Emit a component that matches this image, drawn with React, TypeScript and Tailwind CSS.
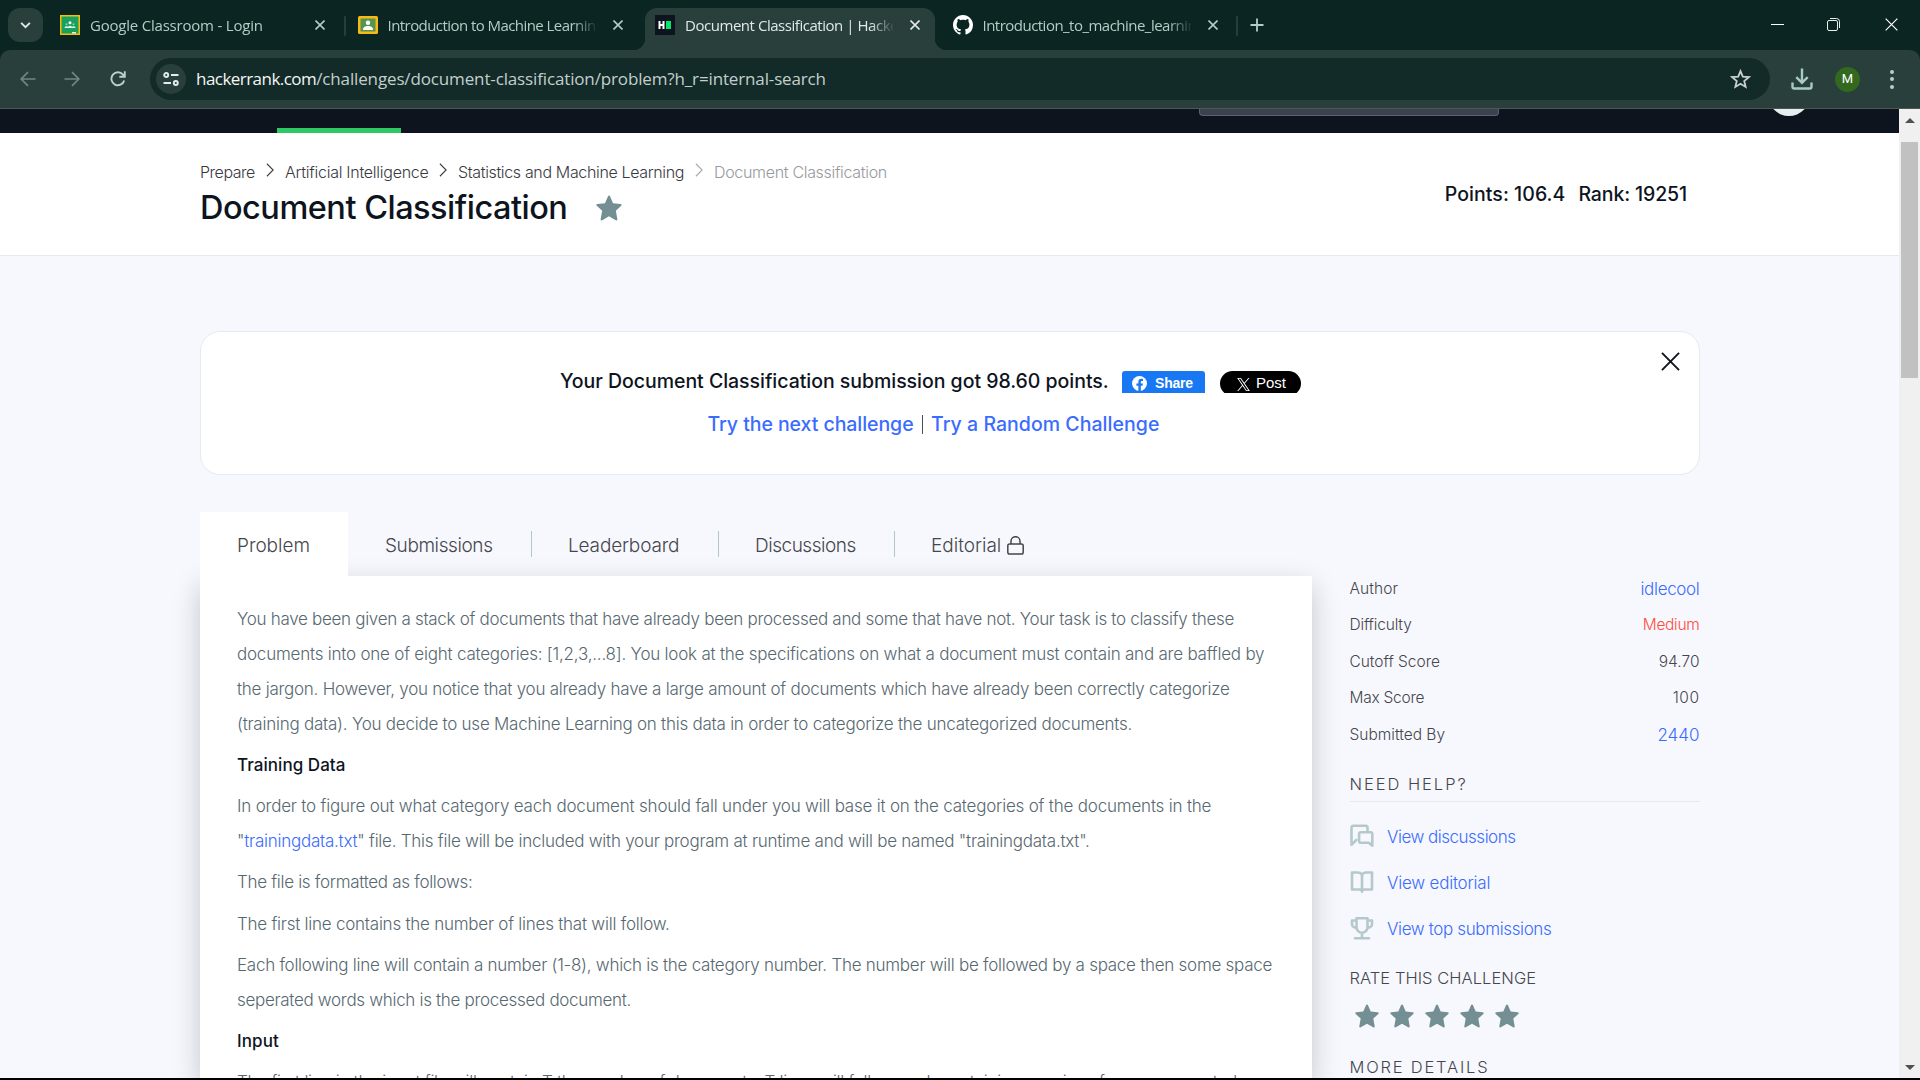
import type { ReactNode } from "react";

function CloseIcon({ className }: { className: string }) {
  return (
    <svg viewBox="0 0 10 10" className={className} fill="none" stroke="currentColor">
      <path d="M.5 .5 9.5 9.5M9.5 .5.5 9.5" />
    </svg>
  );
}

function StarShape({ className }: { className: string }) {
  return (
    <svg viewBox="0 0 24 24" className={className} fill="currentColor">
      <path d="M12 .5c.5 0 .8.4 1 .8l2.7 6.3 6.9.7c1.2.1 1.4 1 .7 1.7l-5 4.6 1.4 7.6c.2 1.1-.6 1.6-1.5 1.1L12 19.7l-6.2 3.6c-.9.5-1.7 0-1.5-1.1l1.4-7.6-5-4.6C0 9.300.2 8.400 1.400 8.300l6.900-.7L11 1.300c.2-.4.5-.8 1-.8z" />
    </svg>
  );
}

function ClassroomGreen() {
  return (
    <svg viewBox="0 0 20 20" className="h-5 w-5">
      <rect width="20" height="20" fill="#f9bc0b" />
      <rect x="1.500" y="1.500" width="17" height="17" fill="#18a05f" />
      <circle cx="10" cy="7.800" r="1.500" fill="#fff" />
      <circle cx="6.500" cy="9.200" r="1" fill="#8fd0b0" />
      <circle cx="13.500" cy="9.200" r="1" fill="#8fd0b0" />
      <path d="M4.500 12.500c.5-1.600 3-1.600 3.500-.8.800-1.400 3.200-1.400 4 0 .5-.8 3-.8 3.500.8v.5h-11z" fill="#dff2e8" />
      <rect x="12" y="17" width="4" height="1.500" fill="#e8f5ee" />
    </svg>
  );
}

function ClassroomYellow() {
  return (
    <svg viewBox="0 0 20 20" className="h-5 w-5">
      <rect y="1" width="20" height="18" rx="1.500" fill="#f5ba15" />
      <rect x="2.500" y="3.500" width="15" height="13" fill="#57944f" />
      <circle cx="10" cy="7.800" r="2.200" fill="#fff" />
      <path d="M5 14.500c0-2.500 2.500-3.500 5-3.500s5 1 5 3.500v.5H5z" fill="#fff" />
    </svg>
  );
}

function HackerRankIcon() {
  return (
    <svg viewBox="0 0 20 20" className="h-5 w-5">
      <rect width="20" height="20" fill="#0e141e" />
      <path d="M3.500 6h2v3h2V6h2v8h-2v-3h-2v3h-2z" fill="#fff" />
      <rect x="11" y="6" width="5" height="8" fill="#05e76b" />
    </svg>
  );
}

function GithubIcon() {
  return (
    <svg viewBox="0 0 16 16" className="h-5 w-5" fill="#fff">
      <path d="M8 0C3.580 0 0 3.580 0 8c0 3.540 2.290 6.530 5.470 7.590.4.070.55-.17.55-.38 0-.19-.01-.82-.01-1.490-2.010.37-2.530-.49-2.690-.94-.09-.23-.48-.94-.82-1.130-.28-.15-.68-.52-.01-.53.63-.01 1.080.58 1.230.82.72 1.210 1.870.87 2.330.66.070-.52.28-.87.51-1.070-1.780-.2-3.640-.89-3.640-3.950 0-.87.31-1.590.82-2.150-.08-.2-.36-1.020.080-2.120 0 0 .67-.21 2.200.82.64-.18 1.320-.27 2-.27s1.360.090 2 .27c1.530-1.040 2.200-.82 2.200-.82.44 1.100.16 1.920.080 2.120.51.56.82 1.270.82 2.150 0 3.070-1.870 3.750-3.650 3.950.29.25.54.73.54 1.480 0 1.070-.01 1.930-.01 2.200 0 .21.15.46.55.38A8.010 8.010 0 0 0 16 8c0-4.420-3.580-8-8-8z" />
    </svg>
  );
}

function BrowserTab({ icon, title, active, divider, tracking }: { icon: ReactNode; title: string; active?: boolean; divider?: boolean; tracking: string }) {
  return (
    <div className="flex h-full w-[297.5px] shrink-0 items-start pt-2">
      <div className={active ? "relative flex h-[42px] w-[290px] items-center rounded-t-xl bg-[#293f3b] pb-2 pl-2.5 text-[#dfe9e6]" : "relative flex h-[42px] w-[290px] items-center pb-2 pl-2.5 text-[#b4ccc6]"}>
        {active && (
          <>
            <span className="absolute bottom-0 -left-3 h-3 w-3 bg-[radial-gradient(circle_at_0_0,transparent_12px,#293f3b_12.5px)]" />
            <span className="absolute -right-3 bottom-0 h-3 w-3 bg-[radial-gradient(circle_at_100%_0,transparent_12px,#293f3b_12.5px)]" />
          </>
        )}
        {icon}
        <span className={"ml-2.5 h-6 w-[208px] overflow-hidden text-[15px] leading-6 whitespace-nowrap [mask-image:linear-gradient(to_right,#000_185px,transparent_210px)] " + tracking}>{title}</span>
        <CloseIcon className="ml-[17px] h-2.5 w-2.5 stroke-[1.6]" />
      </div>
      {divider && <span className="mt-2 ml-[3.500px] h-5 w-0.5 rounded bg-[#24403b]" />}
    </div>
  );
}

function TabStrip() {
  return (
    <div className="flex h-[50px] bg-[#0b2522]">
      <div className="mt-2 mr-[7px] ml-2 flex h-[34px] w-[35px] items-center justify-center rounded-xl bg-[#293f3b]">
        <svg viewBox="0 0 12 8" className="h-[7px] w-[11px]" fill="none" stroke="#dbe8e5" strokeWidth="2.2"><path d="M1 1l5 5 5-5" /></svg>
      </div>
      <BrowserTab icon={<ClassroomGreen />} title="Google Classroom - Login" tracking="tracking-[-0.21px]" divider />
      <BrowserTab icon={<ClassroomYellow />} title="Introduction to Machine Learnin" tracking="tracking-[-0.56px]" />
      <BrowserTab icon={<HackerRankIcon />} title="Document Classification | Hacke" tracking="tracking-[-0.46px]" active />
      <BrowserTab icon={<GithubIcon />} title="Introduction_to_machine_learnin" tracking="tracking-[-0.52px]" divider />
      <svg viewBox="0 0 14 14" className="mt-[18px] ml-[10px] h-3.5 w-3.5" stroke="#b4ccc6" strokeWidth="1.800"><path d="M7 .5v13M.5 7h13" /></svg>
      <div className="mt-[18px] mr-[22px] ml-auto flex h-[13px] items-center">
        <span className="h-[1.500px] w-[13px] bg-white" />
        <svg viewBox="0 0 13 13" className="mr-[45px] ml-[43px] h-[13px] w-[13px]" fill="none" stroke="#e9efee"><path d="M3 .5h6.500a3 3 0 0 1 3 3V10" /><rect x=".5" y="2.500" width="10" height="10" rx="1.500" /></svg>
        <CloseIcon className="h-[13px] w-[13px] stroke-[0.9] text-white" />
      </div>
    </div>
  );
}

function Toolbar() {
  return (
    <div className="bg-[#0b2522]">
      <div className="flex h-[59px] items-center rounded-t-[10px] border-b border-[#4c5754] bg-[#293f3b]">
        <svg viewBox="0 0 16 16" className="ml-5 h-4 w-4" fill="none" stroke="#6f8681" strokeWidth="1.700"><path d="M15.500 8H1.500M8 1.200 1.200 8 8 14.800" /></svg>
        <svg viewBox="0 0 16 16" className="ml-[28px] h-4 w-4" fill="none" stroke="#6f8681" strokeWidth="1.700"><path d="M.5 8h14M8 1.200 14.800 8 8 14.800" /></svg>
        <svg viewBox="0 0 16 16" className="ml-[30px] h-4 w-4" fill="none" stroke="#b9d0cb" strokeWidth="1.900"><path d="M14.200 9.500A6.500 6.500 0 1 1 13 3.700L14.500 5.500M14.800.3v5.500H9.300" /></svg>
        <div className="ml-6 flex h-[42px] w-[1620px] items-center rounded-full bg-[#122b28] pl-1.5">
          <span className="flex h-[30px] w-[30px] items-center justify-center rounded-full bg-[#293f3b]">
            <svg viewBox="0 0 16 14" className="h-3.5 w-4" fill="none" stroke="#e3ecea" strokeWidth="1.900"><circle cx="3.200" cy="3" r="2" /><path d="M8 3h7.500M.5 11H8" /><circle cx="12.800" cy="11" r="2" /></svg>
          </span>
          <p className="ml-2.5 text-[17px] tracking-[-0.14px] whitespace-nowrap text-[#c3cfcc]"><span className="tracking-[-0.54px] text-[#f2f7f6]">hackerrank.com</span>/challenges/document-classification/problem?h_r=internal-search</p>
          <svg viewBox="0 0 22 21" className="mr-[19px] ml-auto h-5 w-[21px]" fill="none" stroke="#c8d0ce" strokeWidth="1.900"><path d="m11 2.200 2.400 5.800 6.300.5-4.800 4.100 1.500 6.200-5.400-3.300-5.400 3.300 1.500-6.200-4.800-4.100 6.300-.5z" /></svg>
        </div>
        <svg viewBox="0 0 22 22" className="ml-[21px] h-[22px] w-[22px]" fill="none" stroke="#a9cbc4" strokeWidth="2.400"><path d="M11 .5v14M5.300 9.200l5.700 5.600 5.700-5.600M1.500 14.500v4.300c0 1 .6 1.700 1.700 1.700h15.600c1.100 0 1.700-.7 1.700-1.700v-4.300" /></svg>
        <span className="ml-[22px] flex h-[25px] w-[25px] items-center justify-center rounded-full bg-[#33691e] font-['Roboto'] text-[13px] text-white">M</span>
        <span className="ml-[30px] flex flex-col gap-[3.500px]">
          <i className="h-1 w-1 rounded-full bg-[#b4d0ca]" /><i className="h-1 w-1 rounded-full bg-[#b4d0ca]" /><i className="h-1 w-1 rounded-full bg-[#b4d0ca]" />
        </span>
      </div>
    </div>
  );
}

function Crumb({ children, className }: { children: ReactNode; className: string }) {
  return <span className={"shrink-0 whitespace-nowrap " + className}>{children}</span>;
}

function Chevron({ className }: { className: string }) {
  return <svg viewBox="0 0 9 14" className={"mx-[11px] -mt-1 h-[14px] w-2 shrink-0 " + className} preserveAspectRatio="none" fill="none" stroke="currentColor" strokeWidth="1.200"><path d="m1 .8 7 6.200L1 13.200" /></svg>;
}

function PageHeader() {
  return (
    <header className="flex h-[123px] justify-between border-b border-[#e6e8ef] bg-white pl-[200px]">
      <div className="pt-[28px]">
        <nav className="flex h-[22px] items-center text-[16px] leading-[22px] font-light text-[#39393f]">
          <Crumb className="w-[55px] tracking-[-0.46px]">Prepare</Crumb>
          <Chevron className="" />
          <Crumb className="w-[143px] tracking-[-0.26px]">Artificial Intelligence</Crumb>
          <Chevron className="" />
          <Crumb className="w-[226px] tracking-[-0.35px]">Statistics and Machine Learning</Crumb>
          <Chevron className="text-[#a5a7ab]" />
          <Crumb className="tracking-[-0.32px] text-[#97999e]">Document Classification</Crumb>
        </nav>
        <div className="flex h-10 items-center pt-[9px]">
          <h1 className="w-[367px] text-[32.5px] leading-10 font-medium tracking-[-0.5px] whitespace-nowrap text-[#0e141e]">Document Classification</h1>
          <StarShape className="ml-[29px] h-[26px] w-[26px] text-[#738f93]" />
        </div>
      </div>
      <div className="mr-[212px] flex gap-[13px] pt-[49px] text-[19.5px] leading-6 font-medium whitespace-nowrap text-[#0e141e]">
        <span className="tracking-[0.05px]">Points: 106.4</span>
        <span className="tracking-[-0.12px]">Rank: 19251</span>
      </div>
    </header>
  );
}

function ResultBanner() {
  return (
    <section className="relative ml-[200px] h-[144px] w-[1500px] rounded-[20px] border border-[#e7e9f1] bg-white text-[19.5px] font-medium">
      <CloseIcon className="absolute top-5 right-[19px] h-[19px] w-[19px] stroke-1 text-[#0e141e]" />
      <div className="flex pt-[37px] pl-[359px]">
        <p className="w-[549px] leading-6 tracking-[-0.03px] whitespace-nowrap text-[#0e141e]">Your Document Classification submission got 98.60 points.</p>
        <div className="mt-[2px] ml-[13px] flex h-[22px] overflow-hidden font-['Liberation_Sans']">
          <span className="flex h-[25px] w-[83px] items-center rounded-[3px] bg-[#1877f2] pl-[10px] text-[14px] font-bold text-white">
            <svg viewBox="0 0 16 16" className="mr-[8px] h-[15px] w-[15px]"><circle cx="8" cy="8" r="8" fill="#fff" /><path d="M6.800 16V10.300H4.700V8h2.100V6.200c0-2.100 1.200-3.200 3.100-3.200.9 0 1.800.2 1.800.2v2h-1c-1 0-1.300.6-1.300 1.300V8h2.200l-.4 2.300H9.400V16z" fill="#1877f2" /></svg>
            <span className="text-[14px] tracking-[-0.2px]">Share</span>
          </span>
          <span className="ml-[15px] flex h-[25px] w-[81px] items-center rounded-full bg-black pl-[17px] text-[15px] font-normal text-white">
            <svg viewBox="0 0 24 24" className="mt-0.5 mr-[6px] h-[13px] w-[13px]" fill="#fff"><path d="M14.300 10.200 23 0h-2.100l-7.500 8.800L7.300 0H.3l9.100 13.300L.3 24h2.100l8-9.300 6.400 9.300h7zm-2.800 3.300-.9-1.300L3.100 1.600h3.200l5.900 8.500.9 1.300 7.700 11.100h-3.200z" /></svg>
            Post
          </span>
        </div>
      </div>
      <p className="flex pt-[19px] pl-[506.500px] leading-6 whitespace-nowrap text-[#3a6cff]">
        <span className="w-[207px] tracking-[-0.06px]">Try the next challenge</span>
        <span className="mt-[3px] ml-[7px] h-[19px] w-px bg-[#4b4f58]" />
        <span className="ml-[8.500px] tracking-[0.04px]">Try a Random Challenge</span>
      </p>
    </section>
  );
}

function TabDivider() {
  return <span className="h-[26px] w-px bg-[#b3c5ca]" />;
}

function ChallengeTabs() {
  return (
    <nav className="relative flex h-16 items-center text-[19px] font-light whitespace-nowrap text-[#45464d]">
      <span className="flex h-full w-[148px] items-center bg-white pt-1 pl-[37px] tracking-[-0.03px]">Problem</span>
      <span className="w-[183px] pt-1 pl-[37px] tracking-[-0.4px]">Submissions</span>
      <TabDivider />
      <span className="w-[186px] pt-1 pl-[36px] tracking-[-0.16px]">Leaderboard</span>
      <TabDivider />
      <span className="w-[175px] pt-1 pl-[36px] tracking-[-0.47px]">Discussions</span>
      <TabDivider />
      <span className="pt-1 pl-[36px]">Editorial</span>
      <svg viewBox="0 0 17 19" className="mt-0.5 ml-[6px] h-[19px] w-[17px]" fill="none" stroke="#45464d" strokeWidth="1.500"><rect x=".8" y="8" width="15.400" height="10" rx="1.800" /><path d="M4 8V5.200a4.500 4.500 0 0 1 9 0V8" /></svg>
    </nav>
  );
}

function Line({ children, className }: { children: ReactNode; className: string }) {
  return <span className={"block whitespace-nowrap " + className}>{children}</span>;
}

function Statement() {
  return (
    <article className="flex h-[502px] flex-col gap-[6.250px] bg-white pt-[25.5px] pl-[37px] text-[17px] leading-[35px] font-light text-[#576871] shadow-[0_10px_26px_rgba(20,24,40,0.22)]">
      <p>
        <Line className="tracking-[-0.3px]">You have been given a stack of documents that have already been processed and some that have not. Your task is to classify these</Line>
        <Line className="tracking-[-0.22px]">documents into one of eight categories: [1,2,3,...8]. You look at the specifications on what a document must contain and are baffled by</Line>
        <Line className="tracking-[-0.26px]">the jargon. However, you notice that you already have a large amount of documents which have already been correctly categorize</Line>
        <Line className="tracking-[-0.242px]">(training data). You decide to use Machine Learning on this data in order to categorize the uncategorized documents.</Line>
      </p>
      <h2 className="font-medium tracking-[0.05px] text-[#0e141e]">Training Data</h2>
      <p>
        <Line className="tracking-[-0.2px]">In order to figure out what category each document should fall under you will base it on the categories of the documents in the</Line>
        <Line className="tracking-[-0.25px]">"<a className="text-[#3a6cff]">trainingdata.txt</a>" file. This file will be included with your program at runtime and will be named "trainingdata.txt".</Line>
      </p>
      <p className="tracking-[-0.3px]">The file is formatted as follows:</p>
      <p className="tracking-[-0.24px]">The first line contains the number of lines that will follow.</p>
      <p>
        <Line className="tracking-[-0.268px]">Each following line will contain a number (1-8), which is the category number. The number will be followed by a space then some space</Line>
        <Line className="tracking-[-0.31px]">seperated words which is the processed document.</Line>
      </p>
      <h2 className="font-medium tracking-[0.12px] text-[#0e141e]">Input</h2>
      <p className="tracking-[-0.262px] whitespace-nowrap">The first line in the input file will contain T the number of documents. T lines will follow each containing a series of space seperated</p>
    </article>
  );
}

function Fact({ label, value, labelClass, valueClass }: { label: string; value: string; labelClass?: string; valueClass: string }) {
  return (
    <div className="flex h-[36.500px] items-center justify-between">
      <span className={labelClass}>{label}</span>
      <span className={valueClass}>{value}</span>
    </div>
  );
}

function HelpLink({ icon, children, className }: { icon: ReactNode; children: ReactNode; className: string }) {
  return (
    <div className="flex h-[46px] items-center text-[17px] text-[#3a6cff]">
      <svg viewBox="0 0 24 24" className="mb-[3px] h-6 w-6" fill="none" stroke="#b5c9cc" strokeWidth="2.600" strokeLinejoin="round" strokeLinecap="round">{icon}</svg>
      <span className={"ml-[13.500px] " + className}>{children}</span>
    </div>
  );
}

function Sidebar() {
  return (
    <aside className="mt-[58px] ml-[37.500px] w-[350px] text-[15.5px] font-light whitespace-nowrap text-[#45464d]">
      <Fact label="Author" labelClass="tracking-[0.1px]" value="idlecool" valueClass="pt-0.5 text-[17px] tracking-[-0.33px] text-[#3a6cff]" />
      <Fact label="Difficulty" labelClass="tracking-[-0.18px]" value="Medium" valueClass="tracking-[-0.3px] text-[#ff4a3d]" />
      <Fact label="Cutoff Score" labelClass="tracking-[-0.02px]" value="94.70" valueClass="" />
      <Fact label="Max Score" labelClass="tracking-[-0.25px]" value="100" valueClass="tracking-[0.5px]" />
      <Fact label="Submitted By" value="2440" valueClass="pt-0.5 text-[17px] text-[#3a6cff]" />
      <h3 className="mt-[13px] h-[36px] border-b border-[#e6e9ee] text-[16.5px] leading-[36px] tracking-[1.95px]">NEED HELP?</h3>
      <div className="pt-[13px]">
        <HelpLink className="tracking-[-0.5px]" icon={<><path d="M17.500 6.500V3.500a1.800 1.800 0 0 0-1.800-1.800H3.300A1.800 1.800 0 0 0 1.500 3.500v17.200l4.800-4.700" /><path d="M10.700 8.200h10a1.600 1.600 0 0 1 1.600 1.600v12l-3.500-3h-8.100a1.600 1.600 0 0 1-1.600-1.600V9.800a1.600 1.600 0 0 1 1.600-1.600z" /></>}>View discussions</HelpLink>
        <HelpLink className="tracking-[-0.22px]" icon={<path d="M12 4.800C11 3 9.500 2.500 8 2.500H2v17h7.500c1.500 0 2.500.8 2.500 2.300 0-1.500 1-2.300 2.500-2.300H22v-17h-6c-1.500 0-3 .5-4 2.300zM12 4.800v17" />}>View editorial</HelpLink>
        <HelpLink className="tracking-[-0.37px]" icon={<path d="M6.500 2.200h11v9c0 3-2.500 5.600-5.500 5.600s-5.500-2.600-5.500-5.600zM6.500 4.500H2v3.800c0 2 2 3.500 4.500 3.500M17.500 4.500H22v3.800c0 2-2 3.500-4.500 3.500M12 17v5M5 22.300h14" />}>View top submissions</HelpLink>
      </div>
      <h3 className="mt-[8px] text-[16.5px] leading-[34px] tracking-[0.05px]">RATE THIS CHALLENGE</h3>
      <div className="mt-[9px] flex gap-[11px] pl-[5px] text-[#738f93]">
        <StarShape className="h-6 w-6" /><StarShape className="h-6 w-6" /><StarShape className="h-6 w-6" /><StarShape className="h-6 w-6" /><StarShape className="h-6 w-6" />
      </div>
      <h3 className="mt-[21px] text-[16.5px] leading-[36px] tracking-[1.8px]">MORE DETAILS</h3>
    </aside>
  );
}

function Scrollbar() {
  return (
    <div className="flex h-full w-[21px] flex-col items-center justify-between bg-[#f0f0f0] pt-[9px] pb-[8px]">
      <span className="h-0 w-0 border-x-[5px] border-b-[5px] border-x-transparent border-b-[#505050]" />
      <span className="mt-[19px] mb-auto h-[236px] w-[17px] bg-[#c1c1c1]" />
      <span className="h-0 w-0 border-x-[5px] border-t-[5px] border-x-transparent border-t-[#505050]" />
    </div>
  );
}

export default function App() {
  return (
    <div className="flex h-[1080px] w-[1920px] flex-col overflow-hidden bg-black font-['Open_Sans',sans-serif]">
      <TabStrip />
      <Toolbar />
      <div className="flex h-[969px]">
        <main className="h-full w-[1899px] overflow-hidden bg-[#f7f8fd] font-['Inter',sans-serif]">
          <div className="flex h-6 bg-[#0e141e]">
            <span className="mt-[19px] ml-[277px] h-[5px] w-[124px] bg-[#2ec866]" />
            <span className="ml-[798px] h-[7px] w-[300px] rounded-b-[4px] border border-t-0 border-[#596273] bg-[#39424e]" />
            <span className="ml-[269px] h-[7px] w-[42px] overflow-hidden"><i className="-mt-[35px] block h-[42px] w-[42px] rounded-full bg-[#e7eeef]" /></span>
          </div>
          <PageHeader />
          <div className="pt-[75px]">
            <ResultBanner />
            <div className="mt-[37px] ml-[200px] flex">
              <section className="flex w-[1112px] flex-col">
                <ChallengeTabs />
                <Statement />
              </section>
              <Sidebar />
            </div>
          </div>
        </main>
        <Scrollbar />
      </div>
    </div>
  );
}
